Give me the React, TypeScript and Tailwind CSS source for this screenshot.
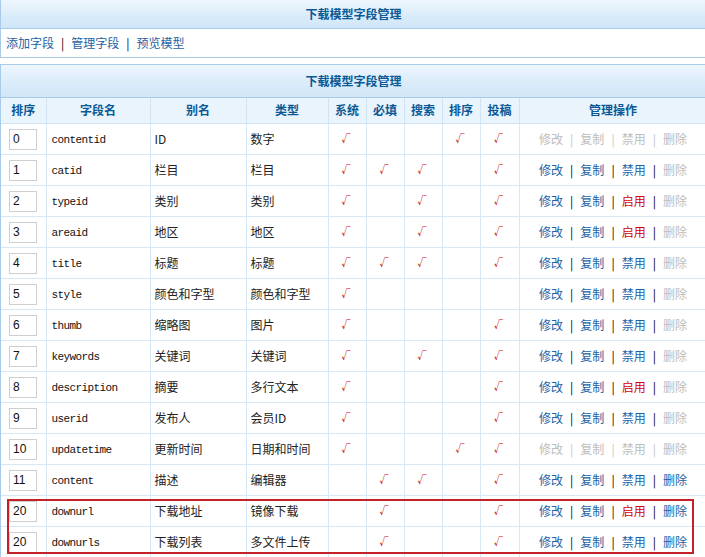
import React from 'react';

type Op = 'on' | 'off' | 'enable';

interface Field {
    order: string;
    field: string;
    name: string;
    type: string;
    checks: [boolean, boolean, boolean, boolean, boolean];
    locked?: boolean;
    toggle: Op;
    del: boolean;
}

const fields: Field[] = [
    { order: '0', field: 'contentid', name: 'ID', type: '数字', checks: [true, false, false, true, true], locked: true, toggle: 'off', del: false },
    { order: '1', field: 'catid', name: '栏目', type: '栏目', checks: [true, true, true, false, true], toggle: 'on', del: false },
    { order: '2', field: 'typeid', name: '类别', type: '类别', checks: [true, false, true, false, true], toggle: 'enable', del: false },
    { order: '3', field: 'areaid', name: '地区', type: '地区', checks: [true, false, true, false, true], toggle: 'enable', del: false },
    { order: '4', field: 'title', name: '标题', type: '标题', checks: [true, true, true, false, true], toggle: 'on', del: false },
    { order: '5', field: 'style', name: '颜色和字型', type: '颜色和字型', checks: [true, false, false, false, false], toggle: 'on', del: false },
    { order: '6', field: 'thumb', name: '缩略图', type: '图片', checks: [true, false, false, false, true], toggle: 'on', del: false },
    { order: '7', field: 'keywords', name: '关键词', type: '关键词', checks: [true, false, true, false, true], toggle: 'on', del: false },
    { order: '8', field: 'description', name: '摘要', type: '多行文本', checks: [true, false, false, false, true], toggle: 'enable', del: false },
    { order: '9', field: 'userid', name: '发布人', type: '会员ID', checks: [true, false, false, false, true], toggle: 'on', del: false },
    { order: '10', field: 'updatetime', name: '更新时间', type: '日期和时间', checks: [true, false, false, true, true], locked: true, toggle: 'off', del: false },
    { order: '11', field: 'content', name: '描述', type: '编辑器', checks: [false, true, true, false, true], toggle: 'on', del: true },
    { order: '20', field: 'downurl', name: '下载地址', type: '镜像下载', checks: [false, true, false, false, true], toggle: 'enable', del: true },
    { order: '20', field: 'downurls', name: '下载列表', type: '多文件上传', checks: [false, true, false, false, true], toggle: 'on', del: true },
];

const cjk = "font-['Noto_Sans_CJK_SC',sans-serif]";

function Sep({ gray }: { gray?: boolean }) {
    return <span className={`mx-[7px] ${gray ? 'text-[#c4c4c4]' : 'text-black'}`}>|</span>;
}

function Ops({ f }: { f: Field }) {
    const link = f.locked ? 'text-[#bdbdbd]' : 'text-[#1b62a6]';
    const toggleCls = f.locked ? 'text-[#bdbdbd]' : f.toggle === 'enable' ? 'text-[#d40000]' : 'text-[#1b62a6]';
    return (
        <span className="whitespace-nowrap">
            <span className={link}>修改</span>
            <Sep gray={f.locked} />
            <span className={link}>复制</span>
            <Sep gray={f.locked} />
            <span className={toggleCls}>{f.toggle === 'enable' ? '启用' : '禁用'}</span>
            <Sep gray={f.locked} />
            <span className={f.del ? 'text-[#1b62a6]' : 'text-[#bdbdbd]'}>删除</span>
        </span>
    );
}

function BoxHeader({ h }: { h: string }) {
    return (
        <div className={`${h} flex items-center justify-center border-b border-[#a7cbe8] bg-gradient-to-b from-[#eef6fd] via-[#dcedfa] to-[#cfe6f8]`}>
            <span className="text-[12px] font-bold text-[#0a5995]">下载模型字段管理</span>
        </div>
    );
}

export default function App() {
    const cols = [45, 104, 96, 82, 38, 38, 38, 38, 39, 188];
    const heads = ['排序', '字段名', '别名', '类型', '系统', '必填', '搜索', '排序', '投稿', '管理操作'];

    return (
        <div className={`w-[705px] h-[557px] overflow-hidden bg-white text-[12px] text-[#222] ${cjk}`}>
            <div className="relative w-[707px]">
                {/* quick links */}
                <div className="border-x border-b border-[#a7cbe8]">
                    <BoxHeader h="h-[29px]" />
                    <div className="h-[28px] flex items-center pl-[5px]">
                        <span className="text-[#1b62a6]">添加字段</span>
                        <Sep />
                        <span className="text-[#1b62a6]">管理字段</span>
                        <Sep />
                        <span className="text-[#1b62a6]">预览模型</span>
                    </div>
                </div>

                {/* field list */}
                <div className="mt-[6px] border-x border-t border-[#a7cbe8]">
                    <BoxHeader h="h-[33px]" />
                    <table className="table-fixed border-collapse w-[705px]">
                        <colgroup>
                            {cols.map((w, i) => (
                                <col key={i} style={{ width: w }} />
                            ))}
                        </colgroup>
                        <thead>
                            <tr className="h-[25px] bg-[#e9f4fc]">
                                {heads.map((t, i) => (
                                    <th key={i} className="border border-[#cfe3f3] border-t-0 text-[12px] font-bold text-[#0a5995] text-center p-0 first:border-l-0">
                                        {t}
                                    </th>
                                ))}
                            </tr>
                        </thead>
                        <tbody>
                            {fields.map((f, i) => (
                                <tr key={i} className="h-[31px]">
                                    <td className="border border-[#d6e8f5] border-l-0 pl-[8px] p-0">
                                        <div className="w-[28px] h-[21px] mt-[1px] border border-[#cfcfcf] pl-[3px] flex items-center text-[12px] text-[#111] font-['Liberation_Sans',sans-serif]">
                                            {f.order}
                                        </div>
                                    </td>
                                    <td className="border border-[#d6e8f5] pl-[5px] pt-[3px] p-0 font-['Liberation_Mono',monospace] text-[11px] tracking-[-0.6px] text-[#111]">
                                        {f.field}
                                    </td>
                                    <td className="border border-[#d6e8f5] pl-[4px] p-0">{f.name}</td>
                                    <td className="border border-[#d6e8f5] pl-[4px] p-0">{f.type}</td>
                                    {f.checks.map((c, j) => (
                                        <td key={j} className="border border-[#d6e8f5] text-center p-0 pr-[2px] text-[#c40000] text-[9px] font-bold">
                                            {c ? '√' : ''}
                                        </td>
                                    ))}
                                    <td className="border border-[#d6e8f5] text-center p-0">
                                        <Ops f={f} />
                                    </td>
                                </tr>
                            ))}
                        </tbody>
                    </table>
                </div>

                {/* highlight around the download fields */}
                <div className="absolute left-[7px] top-[499px] w-[687px] h-[55px] border-2 border-[#c3202a] pointer-events-none" />
            </div>
        </div>
    );
}
